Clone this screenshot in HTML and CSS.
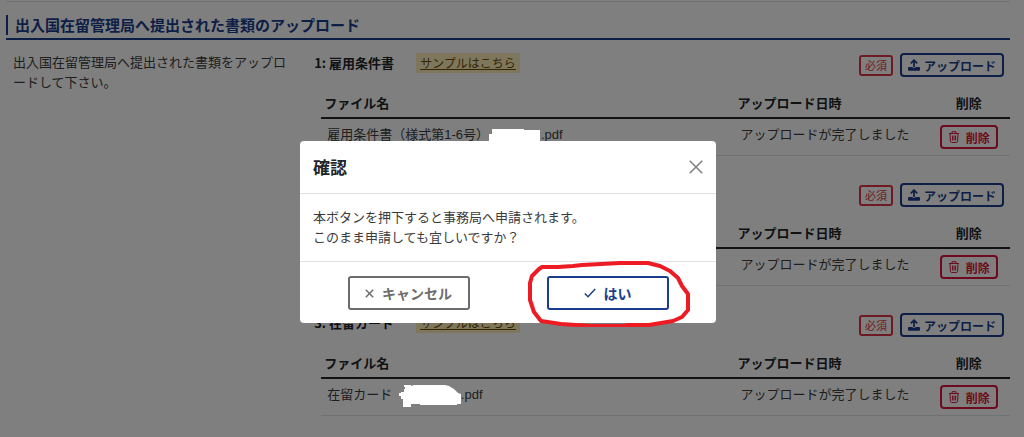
FILE: index.html
```html
<!DOCTYPE html>
<html lang="ja">
  <head>
    <meta charset="UTF-8" />
    <meta name="viewport" content="width=device-width, initial-scale=1.0" />
    <title>書類のアップロード</title>
    <link rel="stylesheet" href="styles.css">
  </head>
  <body>
    <!-- Shared icons -->
    <svg class="icon-defs" aria-hidden="true">
      <symbol id="icon-upload" viewBox="0 0 12 12">
        <path d="M6 8V1.5M2.800 4.400 6 1.200 9.200 4.400" fill="none" stroke="currentColor" stroke-width="1.700" />
        <path d="M1 8h3.2c.3 1 3.300 1 3.600 0H11a1 1 0 0 1 1 1v1.800a1 1 0 0 1-1 1H1a1 1 0 0 1-1-1V9a1 1 0 0 1 1-1z" fill="currentColor" />
      </symbol>
      <symbol id="icon-trash" viewBox="0 0 12 12">
        <path d="M1 2.500h10M4 2.500V.7h4v1.800M2 2.500l.4 7.800q.1 1.200 1.200 1.200h4.800q1.100 0 1.200-1.200L10 2.500M4.400 4.500v5M6 4.500v5M7.600 4.500v5" fill="none" stroke="currentColor" />
      </symbol>
    </svg>

    <main class="page">
      <section class="documents">
        <h2 class="documents-title"><span>出入国在留管理局へ提出された書類のアップロード</span></h2>
        <div class="documents-body">
          <p class="description">出入国在留管理局へ提出された書類をアップロードして下さい。</p>
          <div class="items">
            <article class="item">
              <div class="item-head">
                <h3>1: 雇用条件書</h3>
                <a class="sample" href="#">サンプルはこちら</a>
                <span class="required">必須</span>
                <button class="btn upload" type="button"><svg><use href="#icon-upload" /></svg>アップロード</button>
              </div>
              <table>
                <thead>
                  <tr><th class="name">ファイル名</th><th class="date">アップロード日時</th><th class="remove">削除</th></tr>
                </thead>
                <tbody>
                  <tr>
                    <td>雇用条件書（様式第1-6号）<svg class="mask" width="52" height="16" viewBox="0 0 52 16"><path d="M3 1h32v1h16v14H0V6h3z" /></svg>.pdf</td>
                    <td>アップロードが完了しました</td>
                    <td class="remove"><button class="btn delete" type="button"><svg><use href="#icon-trash" /></svg>削除</button></td>
                  </tr>
                </tbody>
              </table>
            </article>

            <article class="item">
              <div class="item-head">
                <h3>2:</h3>
                <a class="sample" href="#">サンプルはこちら</a>
                <span class="required">必須</span>
                <button class="btn upload" type="button"><svg><use href="#icon-upload" /></svg>アップロード</button>
              </div>
              <table>
                <thead>
                  <tr><th class="name">ファイル名</th><th class="date">アップロード日時</th><th class="remove">削除</th></tr>
                </thead>
                <tbody>
                  <tr>
                    <td>.pdf</td>
                    <td>アップロードが完了しました</td>
                    <td class="remove"><button class="btn delete" type="button"><svg><use href="#icon-trash" /></svg>削除</button></td>
                  </tr>
                </tbody>
              </table>
            </article>

            <article class="item">
              <div class="item-head">
                <h3>3: 在留カード</h3>
                <a class="sample" href="#">サンプルはこちら</a>
                <span class="required">必須</span>
                <button class="btn upload" type="button"><svg><use href="#icon-upload" /></svg>アップロード</button>
              </div>
              <table>
                <thead>
                  <tr><th class="name">ファイル名</th><th class="date">アップロード日時</th><th class="remove">削除</th></tr>
                </thead>
                <tbody>
                  <tr>
                    <td>在留カード <svg class="mask wide" width="62" height="24" viewBox="0 0 62 24"><path d="M5 1h7v1l3-1h31l4 1 5 3 4 4 3 1v10h-4v1H21v-1h-9v3H4v-8H2v-3H0V9h2V8h3V5h1V3H5z" /></svg>.pdf</td>
                    <td>アップロードが完了しました</td>
                    <td class="remove"><button class="btn delete" type="button"><svg><use href="#icon-trash" /></svg>削除</button></td>
                  </tr>
                </tbody>
              </table>
            </article>
          </div>
        </div>
      </section>
    </main>

    <!-- Confirmation dialog -->
    <div class="backdrop"></div>
    <div class="modal-wrap">
      <div class="modal" role="dialog" aria-modal="true" aria-labelledby="modal-title">
        <header class="modal-header">
          <h2 id="modal-title">確認</h2>
          <button class="close" type="button" aria-label="閉じる">
            <svg width="14" height="14" viewBox="0 0 14 14"><path d="M.7.7l12.600 12.600M13.300.7L.7 13.300" /></svg>
          </button>
        </header>
        <p class="modal-body">本ボタンを押下すると事務局へ申請されます。<br>このまま申請しても宜しいですか？</p>
        <footer class="modal-footer">
          <button class="action cancel" type="button">
            <svg width="9" height="9" viewBox="0 0 9 9"><path d="M.8.8l7.400 7.400M8.200.8L.8 8.200" /></svg>キャンセル
          </button>
          <button class="action ok" type="button">
            <svg width="12" height="10" viewBox="0 0 12 10"><path d="M.8 5.500l3.200 3.200L11.200 1" /></svg>はい
            <svg class="marker" width="166" height="66" viewBox="0 0 166 66"><path d="M13 8 16 6 32 6 47 5 56 4 94 2h28l12 3 10 5 8 7 4 8 6 8v16l-6 7-9 4-12 2-12 2-20 0-6 1H65l-30-2-20-3-7-9-4-12 0-17 2-7z" /></svg>
          </button>
        </footer>
      </div>
    </div>
  </body>
</html>
```

FILE: styles.css
```css
* {
  box-sizing: border-box;
}

body {
  margin: 0;
  overflow: hidden;
  background-color: #fff;
  color: #3c3c3c;
  font-family: "Noto Sans CJK JP", sans-serif;
  font-size: 13px;
  line-height: 20px;
}

h2,
h3,
p {
  margin: 0;
}

button {
  font-family: inherit;
  background: none;
  cursor: pointer;
}

.icon-defs {
  position: absolute;
  width: 0;
  height: 0;
}

/* Document list */
.page {
  padding: 1px 14px 0 6px;
}

.documents {
  border-top: 1px solid #dee2e6;
}

.documents-title {
  padding: 13px 0 3px;
  border-bottom: 2px solid #1a3e8c;
  color: #1a3e8c;
  font-size: 15px;
}

.documents-title span {
  display: block;
  padding-left: 7px;
  border-left: 2px solid #1a3e8c;
}

.documents-body {
  display: flex;
}

.description {
  flex: 0 0 30%;
  padding: 12px 14px 0 7px;
}

.items {
  flex: 1;
  padding-left: 7px;
}

.item {
  padding: 13px 0 14px;
}

.item-head {
  display: flex;
  align-items: center;
  padding-right: 6px;
}

.item-head h3 {
  min-width: 83px;
  padding-bottom: 4px;
  color: #212529;
  font-size: 13px;
}

.sample {
  margin: 0 auto 4px 19px;
  padding: 0 4px;
  background-color: #ffeeba;
  color: #664d03;
  font-size: 12px;
}

.required {
  margin-right: 7px;
  padding: 0 4px;
  border: 2px solid #dc3545;
  border-radius: 3px;
  color: #dc3545;
  font-size: 11px;
  line-height: 17px;
}

.btn {
  display: inline-flex;
  align-items: center;
  justify-content: center;
  height: 24px;
  border: 2px solid;
  border-radius: 4px;
  font-size: 12px;
  font-weight: bold;
}

.btn svg {
  width: 12px;
  height: 12px;
}

.upload {
  gap: 4px;
  padding: 0 6px;
  border-color: #1a3e8c;
  color: #1a3e8c;
}

.delete {
  gap: 6px;
  padding: 0 6px;
  border-color: #dc143c;
  color: #dc143c;
}

table {
  width: calc(100% - 7px);
  margin: 15px 0 0 7px;
  border-collapse: collapse;
  table-layout: fixed;
}

th {
  padding: 1px 3px 4px;
  border-bottom: 2px solid #212529;
  color: #212529;
  text-align: left;
}

.name {
  width: 60%;
}

.date {
  width: 28%;
}

.remove {
  text-align: center;
}

td {
  padding: 6px;
  border-bottom: 1px solid #dee2e6;
  font-family: "Liberation Sans", "Noto Sans CJK JP", sans-serif;
  vertical-align: top;
}

td .btn {
  display: flex;
  margin: 0 auto;
  font-family: "Noto Sans CJK JP", sans-serif;
}

/* White marks that hide the file names */
.mask {
  position: relative;
  z-index: 20;
  margin: -2px 0;
  vertical-align: middle;
  fill: #fff;
}

.wide {
  margin: -2px 0 -2px 3px;
}

/* Dialog */
.backdrop {
  position: fixed;
  inset: 0;
  z-index: 10;
  background-color: rgba(0, 0, 0, 0.5);
}

.modal-wrap {
  position: fixed;
  inset: 0;
  z-index: 30;
  display: flex;
  align-items: flex-start;
  justify-content: center;
  padding: 141px 8px 0 0;
}

.modal {
  width: 100%;
  max-width: 416px;
  border-radius: 4px;
  background-color: #fff;
}

.modal-header {
  display: flex;
  align-items: center;
  justify-content: space-between;
  padding: 13px;
  border-bottom: 1px solid #dee2e6;
}

.modal-header h2 {
  color: #212529;
  font-size: 17px;
  line-height: 26px;
}

.close {
  display: flex;
  padding: 0;
  border: 0;
  color: #808080;
}

.modal svg {
  fill: none;
  stroke: currentColor;
  stroke-width: 1.5;
}

.modal-body {
  padding: 13px 13px 14px;
}

.modal-footer {
  display: flex;
  justify-content: space-around;
  padding: 14px 9px 13px;
  border-top: 1px solid #dee2e6;
}

.action {
  position: relative;
  display: flex;
  align-items: center;
  justify-content: center;
  gap: 8px;
  width: 122px;
  height: 34px;
  border: 2px solid;
  border-radius: 3px;
  font-size: 14px;
  font-weight: bold;
}

.cancel {
  border-color: #6c6c6c;
  color: #6c6c6c;
}

.ok {
  border-color: #1a3e8c;
  color: #1a3e8c;
}

/* Hand-drawn ring around the confirm button */
.modal .marker {
  position: absolute;
  top: -17px;
  left: -23px;
  stroke: #ed1c24;
  stroke-width: 4;
  stroke-linejoin: round;
}
```
